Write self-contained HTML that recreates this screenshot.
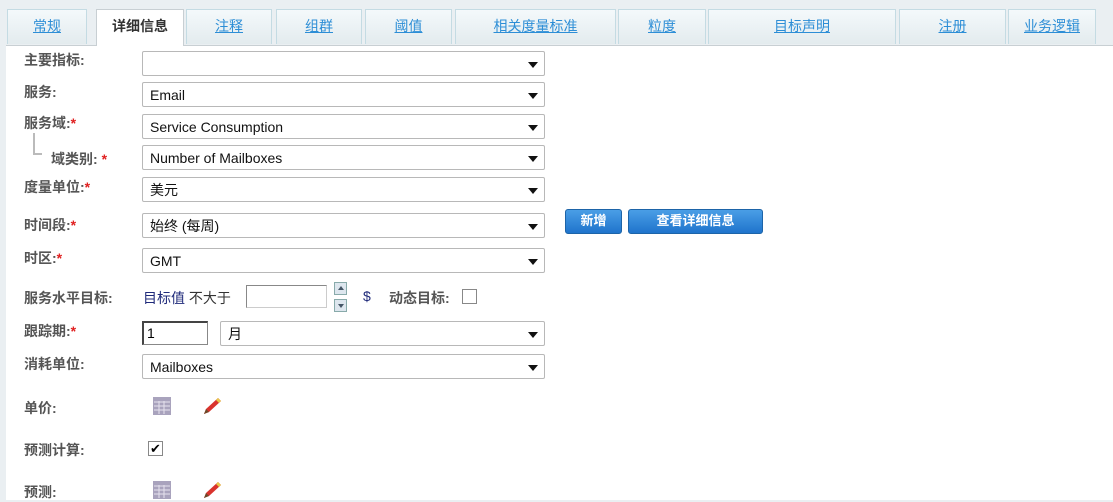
<!DOCTYPE html>
<html><head><meta charset="utf-8"><style>
body{margin:0;width:1113px;height:499px;overflow:hidden;background:#eaeff2;font-family:"Liberation Sans","Noto Sans CJK SC",sans-serif;font-size:14px;position:relative}
.content{position:absolute;left:6px;top:45px;width:1107px;height:454px;background:#fff;border-top:1px solid #c8cfd3}
.tab{position:absolute;top:9px;height:35px;box-sizing:border-box;border:1px solid #c4dbe3;border-bottom:none;background:linear-gradient(#f4f9fb,#e3ebee);text-align:center;line-height:32px;color:#2d8ed6;text-decoration:underline;font-size:14px}
.tab.act{background:#fff;color:#333;text-decoration:none;font-weight:bold;height:37px;z-index:2;border-color:#c8cfd3}
.a{position:absolute}
.lbl{position:absolute;left:24px;color:#555;font-weight:bold;font-size:14px}
.req{color:#e02020}
.sel{position:absolute;left:142px;width:403px;height:25px;box-sizing:border-box;border:1px solid #b8b8b8;border-radius:2px;background:#fff;font-size:14px;line-height:25px;padding-left:7px;color:#111}
.sel:after{content:"";position:absolute;right:6px;top:10px;border-left:5px solid transparent;border-right:5px solid transparent;border-top:6px solid #111}
.btn{position:absolute;top:209px;height:25px;box-sizing:border-box;border:1px solid #1d64a8;border-radius:3px;background:linear-gradient(#4a9ee6,#1f74cc);color:#fff;font-weight:bold;font-size:13px;text-align:center;line-height:22px}
.sp{position:absolute;left:334px;width:13px;height:13px;box-sizing:border-box;border:1px solid #8aa;background:#dde6ee}
</style></head><body>
<div class="content"></div>
<div class="tab" style="left:7px;width:80px">常规</div>
<div class="tab act" style="left:96px;width:88px">详细信息</div>
<div class="tab" style="left:186px;width:86px">注释</div>
<div class="tab" style="left:276px;width:86px">组群</div>
<div class="tab" style="left:365px;width:87px">阈值</div>
<div class="tab" style="left:455px;width:161px">相关度量标准</div>
<div class="tab" style="left:618px;width:88px">粒度</div>
<div class="tab" style="left:708px;width:188px">目标声明</div>
<div class="tab" style="left:899px;width:107px">注册</div>
<div class="tab" style="left:1008px;width:88px">业务逻辑</div>

<div class="lbl" style="top:50px">主要指标:</div><div class="sel" style="top:51px"></div>
<div class="lbl" style="top:82px">服务:</div><div class="sel" style="top:82px">Email</div>
<div class="lbl" style="top:113px">服务域:<span class="req">*</span></div><div class="sel" style="top:114px">Service Consumption</div>
<div class="a" style="left:33px;top:133px;width:2px;height:22px;background:#bbb"></div>
<div class="a" style="left:33px;top:153px;width:9px;height:2px;background:#bbb"></div>
<div class="lbl" style="left:51px;top:149px">域类别: <span class="req">*</span></div><div class="sel" style="top:145px">Number of Mailboxes</div>
<div class="lbl" style="top:177px">度量单位:<span class="req">*</span></div><div class="sel" style="top:177px">美元</div>
<div class="lbl" style="top:215px">时间段:<span class="req">*</span></div><div class="sel" style="top:213px">始终 (每周)</div>
<div class="btn" style="left:565px;width:57px">新增</div>
<div class="btn" style="left:628px;width:135px">查看详细信息</div>
<div class="lbl" style="top:248px">时区:<span class="req">*</span></div><div class="sel" style="top:248px">GMT</div>
<div class="lbl" style="top:288px">服务水平目标:</div>
<div class="a" style="left:143px;top:288px;color:#1f2a7a">目标值 <span style="color:#333">不大于</span></div>
<div class="a" style="left:246px;top:285px;width:81px;height:23px;box-sizing:border-box;border:1px solid #888;border-right-color:#ccc;border-bottom-color:#ccc"></div>
<div class="sp" style="top:282px"><div style="margin:3px auto 0;width:0;border-left:3px solid transparent;border-right:3px solid transparent;border-bottom:4px solid #456"></div></div>
<div class="sp" style="top:299px"><div style="margin:4px auto 0;width:0;border-left:3px solid transparent;border-right:3px solid transparent;border-top:4px solid #456"></div></div>
<div class="a" style="left:363px;top:288px;color:#1f2a7a">$</div>
<div class="a" style="left:389px;top:288px;color:#555;font-weight:bold">动态目标:</div>
<div class="a" style="left:462px;top:289px;width:15px;height:15px;box-sizing:border-box;border:1px solid #888"></div>
<div class="lbl" style="top:321px">跟踪期:<span class="req">*</span></div>
<div class="a" style="left:142px;top:321px;width:66px;height:24px;box-sizing:border-box;border:1px solid #888;border-left:2px solid #444;border-top:2px solid #444;padding-left:3px;line-height:21px">1</div>
<div class="sel" style="left:220px;width:325px;top:321px">月</div>
<div class="lbl" style="top:354px">消耗单位:</div><div class="sel" style="top:354px">Mailboxes</div>
<div class="lbl" style="top:398px">单价:</div>
<div class="lbl" style="top:440px">预测计算:</div>
<div class="lbl" style="top:482px">预测:</div>
<svg class="a" style="left:152px;top:396px" width="20" height="20"><rect x="1" y="1" width="18" height="18" fill="#a9a3bd"/><g stroke="#e6e3ee" stroke-width="1"><path d="M2 6H18M2 10H18M2 14H18M7 5V18M12 5V18"/></g></svg>
<svg class="a" style="left:152px;top:480px" width="20" height="20"><rect x="1" y="1" width="18" height="18" fill="#a9a3bd"/><g stroke="#e6e3ee" stroke-width="1"><path d="M2 6H18M2 10H18M2 14H18M7 5V18M12 5V18"/></g></svg>
<svg class="a" style="left:201px;top:396px" width="22" height="20"><path d="M3 18L5 13L17 2L20 5L8 16Z" fill="#d9332d"/><path d="M17 2L20 5L18 7L15 4Z" fill="#e8c94a"/><path d="M3 18L5 13L8 16Z" fill="#6b4a2a"/></svg>
<svg class="a" style="left:201px;top:480px" width="22" height="20"><path d="M3 18L5 13L17 2L20 5L8 16Z" fill="#d9332d"/><path d="M17 2L20 5L18 7L15 4Z" fill="#e8c94a"/><path d="M3 18L5 13L8 16Z" fill="#6b4a2a"/></svg>
<div class="a" style="left:148px;top:441px;width:15px;height:15px;box-sizing:border-box;border:1px solid #888;font-size:13px;line-height:13px;text-align:center">✔</div>
</body></html>
